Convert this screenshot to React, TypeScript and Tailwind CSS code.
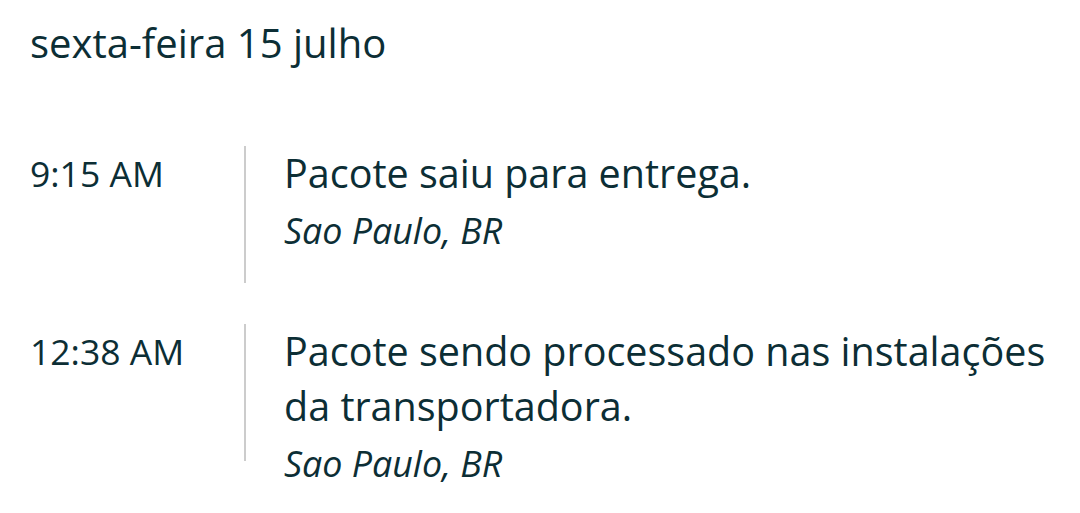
import React from 'react';

interface TrackingEvent {
  time: string;
  lines: string[];
  location: string;
}

const events: TrackingEvent[] = [
  { time: '9:15 AM', lines: ['Pacote saiu para entrega.'], location: 'Sao Paulo, BR' },
  {
    time: '12:38 AM',
    lines: ['Pacote sendo processado nas instalações', 'da transportadora.'],
    location: 'Sao Paulo, BR',
  },
];

export default function App() {
  return (
    <div
      className="w-[1080px] h-[513px] bg-white text-[#0c2e35] overflow-hidden"
      style={{ fontFamily: '"Open Sans", "Noto Sans", sans-serif' }}
    >
      {/* Date header */}
      <div className="pl-[30px] pt-[15px] text-[40px] leading-[56px]">sexta-feira 15 julho</div>

      {/* Timeline */}
      <div className="flex flex-col gap-[41px] mt-[75px]">
        {events.map((ev, idx) => (
          <div key={idx} className="flex items-start">
            <div className="w-[244px] shrink-0 pl-[30px] text-[35.5px] leading-[55px]">{ev.time}</div>
            <div className="w-[2px] h-[137px] shrink-0 bg-[#cccccc]" />
            <div className="pl-[38px]">
              {ev.lines.map((l, i) => (
                <div key={i} className="text-[39.5px] leading-[55px]">{l}</div>
              ))}
              <div className="text-[35.8px] italic leading-[48px] mt-[5px]">{ev.location}</div>
            </div>
          </div>
        ))}
      </div>
    </div>
  );
}
